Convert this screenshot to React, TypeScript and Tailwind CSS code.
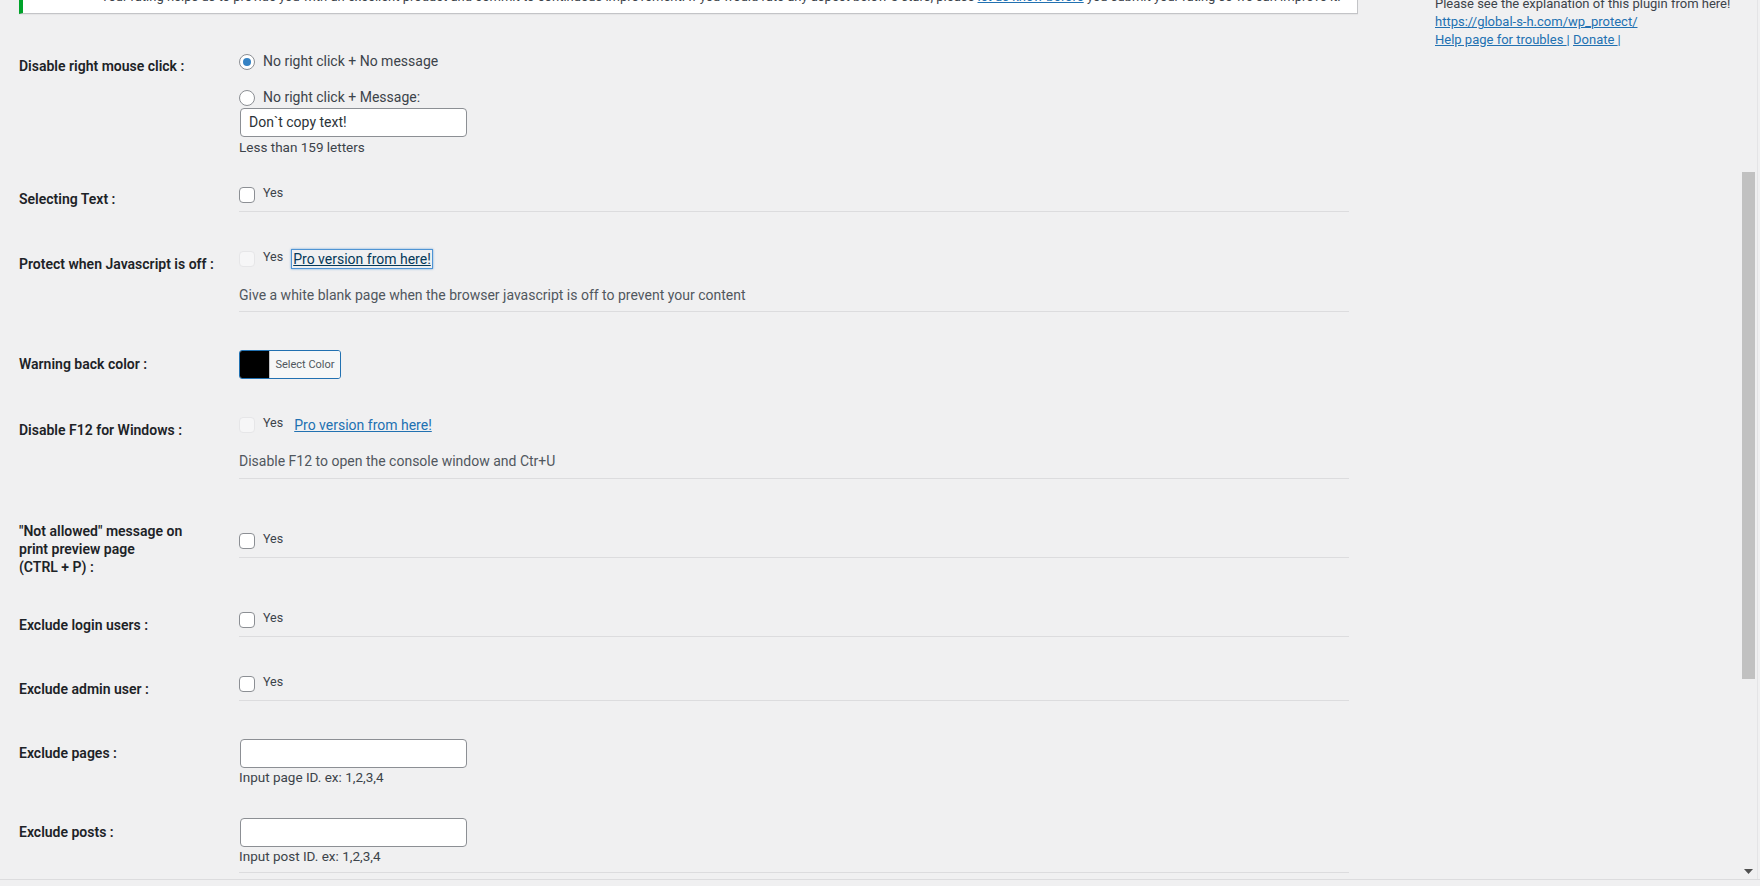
import React from 'react'

// settings screen of the copy-protect plugin (WP admin look)

const Label = ({ children }: { children: React.ReactNode }) => (
  <div className="text-[14px] font-semibold leading-[18px] text-[#1d2327]">{children}</div>
)

const Checkbox = ({ disabled }: { disabled?: boolean }) => (
  <input
    type="checkbox"
    disabled={disabled}
    className={
      disabled
        ? 'appearance-none w-4 h-4 m-0 rounded-[4px] border border-[#e6e6e8] bg-[#f6f6f7] shrink-0'
        : 'appearance-none w-4 h-4 m-0 rounded-[4px] border border-[#8c8f94] bg-white shrink-0'
    }
  />
)

const Radio = ({ checked }: { checked?: boolean }) => (
  <span className="w-4 h-4 rounded-full border border-[#8c8f94] bg-white flex items-center justify-center shrink-0">
    {checked && <span className="w-2 h-2 rounded-full bg-[#3582c4]" />}
  </span>
)

const Yes = () => <span className="text-[12.5px] text-[#3c434a] leading-[16px] mb-[3px]">Yes</span>

const Separator = ({ gap }: { gap: string }) => <div className={gap + ' border-t border-[#dcdcde]'} />

const TextInput = ({ value }: { value?: string }) => (
  <input
    type="text"
    defaultValue={value}
    className="ml-[1px] w-[227px] h-[29px] px-2 rounded-[4px] border border-[#8c8f94] bg-white text-[14px] text-[#2c3338] outline-none"
  />
)

const ProLink = ({ focused }: { focused?: boolean }) => (
  <a
    href="#"
    className={
      focused
        ? 'ml-[1px] inline-block px-[1px] leading-[18px] text-[14px] underline text-[#043959] outline outline-1 outline-[#4f94d4] shadow-[0_0_2px_1px_rgba(79,148,212,0.8)]'
        : 'ml-[3px] inline-block leading-[18px] text-[14px] underline text-[#2271b1]'
    }
  >
    Pro version from here!
  </a>
)

export default function App() {
  return (
    <div className="w-[1760px] h-[886px] overflow-hidden bg-[#f0f0f1] font-[Roboto,sans-serif] flex flex-col">
      <div className="flex h-[879px]">
        {/* main settings column */}
        <div className="w-[1435px] pl-[19px] shrink-0">
          <div className="-mt-[21px] w-[1339px] bg-white border border-[#c3c4c7] border-l-4 border-l-[#00a32a] shadow-[0_1px_1px_rgba(0,0,0,0.04)] pl-[78px] pr-3">
            <p className="my-[6.5px] text-[13px] leading-[19.5px] text-[#3c434a] whitespace-nowrap overflow-hidden">
              Your rating helps us to provide you with an excellent product and commit to continuous improvement. If you would rate any aspect below 5 stars, please{' '}
              <a href="#" className="text-[#2271b1] underline">let us know before</a> you submit your rating so we can improve it.
            </p>
          </div>

          {/* Disable right mouse click */}
          <div className="flex">
            <div className="w-[220px] shrink-0 pt-[43px]">
              <Label>Disable right mouse click :</Label>
            </div>
            <div className="w-[1110px] pt-[38px] pb-[14px]">
              <div className="h-[20px] flex items-center gap-[8px]">
                <Radio checked />
                <span className="text-[14px] text-[#3c434a]">No right click + No message</span>
              </div>
              <div className="mt-[16px] h-[20px] flex items-center gap-[8px]">
                <Radio />
                <span className="text-[14px] text-[#3c434a]">No right click + Message:</span>
              </div>
              <TextInput value="Don`t copy text!" />
              <div className="text-[13.5px] leading-[20px] text-[#3c434a]">Less than 159 letters</div>
            </div>
          </div>

          {/* Selecting Text */}
          <div className="flex">
            <div className="w-[220px] shrink-0 pt-[19px]">
              <Label>Selecting Text :</Label>
            </div>
            <div className="w-[1110px] pt-[14px]">
              <div className="h-[20px] flex items-center gap-[8px]">
                <Checkbox />
                <Yes />
              </div>
              <Separator gap="mt-[6px]" />
            </div>
          </div>

          {/* Protect when Javascript is off */}
          <div className="flex">
            <div className="w-[220px] shrink-0 pt-[43px]">
              <Label>Protect when Javascript is off :</Label>
            </div>
            <div className="w-[1110px] pt-[37px]">
              <div className="h-[20px] flex items-center gap-[8px]">
                <Checkbox disabled />
                <Yes />
                <ProLink focused />
              </div>
              <div className="mt-[16px] text-[14px] leading-[20px] text-[#50575e]">
                Give a white blank page when the browser javascript is off to prevent your content
              </div>
              <Separator gap="mt-[6px]" />
            </div>
          </div>

          {/* Warning back color */}
          <div className="flex">
            <div className="w-[220px] shrink-0 pt-[43px]">
              <Label>Warning back color :</Label>
            </div>
            <div className="w-[1110px] pt-[38px] pb-[12px]">
              <button className="h-[29px] w-[102px] flex rounded-[3px] border border-[#2271b1] overflow-hidden">
                <span className="w-[29px] h-full bg-black shrink-0" />
                <span className="flex-1 h-full bg-[#f6f7f7] border-l border-[#c3c4c7] text-[11px] leading-[27px] text-[#50575e] text-center">
                  Select Color
                </span>
              </button>
            </div>
          </div>

          {/* Disable F12 */}
          <div className="flex">
            <div className="w-[220px] shrink-0 pt-[30px]">
              <Label>Disable F12 for Windows :</Label>
            </div>
            <div className="w-[1110px] pt-[24px]">
              <div className="h-[20px] flex items-center gap-[8px]">
                <Checkbox disabled />
                <Yes />
                <ProLink />
              </div>
              <div className="mt-[16px] text-[14px] leading-[20px] text-[#50575e]">
                Disable F12 to open the console window and Ctr+U
              </div>
              <Separator gap="mt-[7px]" />
            </div>
          </div>

          {/* print preview */}
          <div className="flex">
            <div className="w-[220px] shrink-0 pt-[43px] pb-[15px]">
              <Label>
                "Not allowed" message on
                <br />
                print preview page
                <br />
                (CTRL + P) :
              </Label>
            </div>
            <div className="w-[1110px] pt-[52px]">
              <div className="h-[20px] flex items-center gap-[8px]">
                <Checkbox />
                <Yes />
              </div>
              <Separator gap="mt-[6px]" />
            </div>
          </div>

          {/* Exclude login users */}
          <div className="flex">
            <div className="w-[220px] shrink-0 pt-[25px]">
              <Label>Exclude login users :</Label>
            </div>
            <div className="w-[1110px] pt-[19px]">
              <div className="h-[20px] flex items-center gap-[8px]">
                <Checkbox />
                <Yes />
              </div>
              <Separator gap="mt-[6px]" />
            </div>
          </div>

          {/* Exclude admin user */}
          <div className="flex">
            <div className="w-[220px] shrink-0 pt-[43px]">
              <Label>Exclude admin user :</Label>
            </div>
            <div className="w-[1110px] pt-[37px]">
              <div className="h-[20px] flex items-center gap-[8px]">
                <Checkbox />
                <Yes />
              </div>
              <Separator gap="mt-[6px]" />
            </div>
          </div>

          {/* Exclude pages */}
          <div className="flex">
            <div className="w-[220px] shrink-0 pt-[43px]">
              <Label>Exclude pages :</Label>
            </div>
            <div className="w-[1110px] pt-[38px] pb-[5px]">
              <TextInput />
              <div className="text-[13.5px] leading-[18px] text-[#3c434a]">Input page ID. ex: 1,2,3,4</div>
            </div>
          </div>

          {/* Exclude posts */}
          <div className="flex">
            <div className="w-[220px] shrink-0 pt-[32px]">
              <Label>Exclude posts :</Label>
            </div>
            <div className="w-[1110px] pt-[27px]">
              <TextInput />
              <div className="text-[13.5px] leading-[18px] text-[#3c434a]">Input post ID. ex: 1,2,3,4</div>
              <Separator gap="mt-[7px]" />
            </div>
          </div>
        </div>

        {/* sidebar */}
        <div className="flex-1 -mt-[5px] text-[13px] leading-[18px] text-[#3c434a]">
          <div>Please see the explanation of this plugin from here!</div>
          <a href="#" className="block text-[#2271b1] underline">https://global-s-h.com/wp_protect/</a>
          <div>
            <a href="#" className="text-[#2271b1] underline">Help page for troubles </a>
            <span className="text-[#2271b1]">|</span>{' '}
            <a href="#" className="text-[#2271b1] underline">Donate </a>
            <span className="text-[#2271b1]">|</span>
          </div>
        </div>

        {/* window scrollbar */}
        <div className="w-[17px] shrink-0 flex flex-col">
          <div className="h-[172px]" />
          <div className="mx-[2px] h-[507px] bg-[#c1c1c1]" />
          <div className="flex-1 flex items-end justify-center pb-[5px]">
            <svg width="9" height="5" viewBox="0 0 9 5">
              <path d="M0 0h9L4.5 5z" fill="#505050" />
            </svg>
          </div>
        </div>
        <div className="w-[3px] shrink-0 border-l border-[#e4e4e6]" />
      </div>
      <div className="flex-1 border-t border-[#dcdcde] bg-[#f0f0f1]" />
    </div>
  )
}
